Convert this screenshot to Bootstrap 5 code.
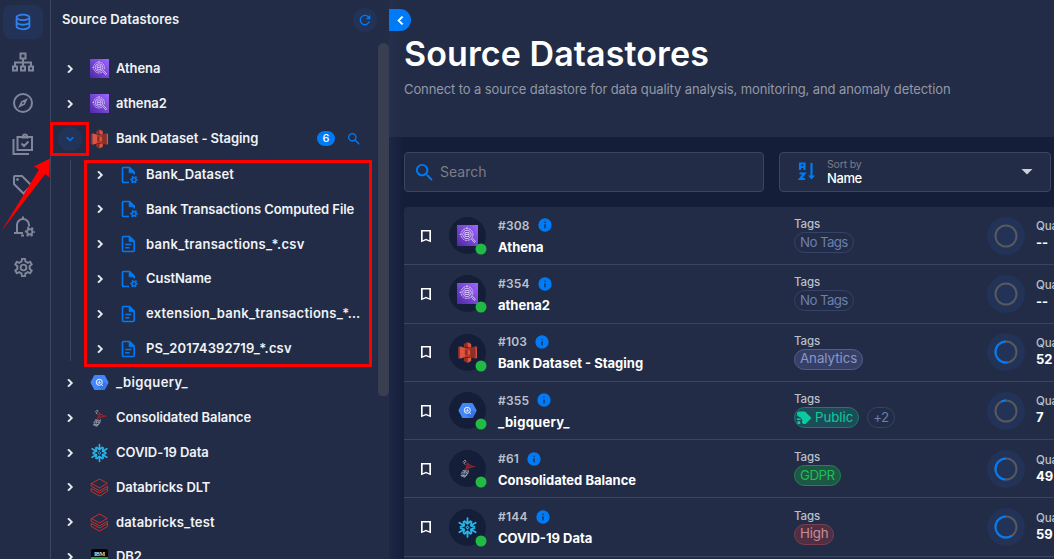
<!DOCTYPE html>
<html lang="en">
<head>
<meta charset="utf-8">
<meta name="viewport" content="width=device-width, initial-scale=1">
<title>Source Datastores</title>
<link href="https://cdn.jsdelivr.net/npm/bootstrap@5.3.0/dist/css/bootstrap.min.css" rel="stylesheet">
<style>
:root{--panel:#222c46;--deep:#151e38;--line:#3b4560;--blue:#007bf7}
html,body{height:100%}
body{font-family:Inter,"Liberation Sans",sans-serif;background:var(--deep);color:#f1f3f6;overflow:hidden;font-size:13px;line-height:1.2}
svg{display:block;flex:none}
.ic{fill:currentColor}
.rail{flex:none;width:51px;background:var(--panel);border-right:1px solid #3d465e;color:#80879a;padding:5px 4px 0 3px}
.rail a{width:40px;height:41.2px;color:inherit}
.rail a.on{background:#223357;color:#3080ee;border-radius:8px;height:34px;margin-bottom:2px}
.tree{flex:none;width:338px;background:var(--panel)}
.tree-top{height:40px;padding:0 12px 0 11px}
.tree-top h6{font-size:13px;font-weight:600;letter-spacing:.07px}
.round{width:24px;height:24px;border-radius:50%;background:#233357;color:var(--blue)}
.rows{padding-top:11.5px}
.node{height:34.88px;font-weight:600;letter-spacing:-.07px;white-space:nowrap;padding-left:7px}
.node .tw{width:24px;height:24px;margin-right:8px}
.node .pic{width:19px;margin-right:7px}
.kids .node{padding-left:37px}
.kids .pic{width:17px;margin:0 8px 0 1px}
.kids{position:relative;padding-top:1px;margin-bottom:-1px}
.kids::before{content:"";position:absolute;left:19px;top:4px;bottom:5px;width:1px;background:#3d465e}
.ls-a{letter-spacing:.14px}.ls-b{letter-spacing:.27px}.ls-c{letter-spacing:.4px}
.count{background:var(--blue);color:#fff;width:18px;height:15px;border-radius:8px;font-size:11px;font-weight:500;letter-spacing:0}
.thumb{position:absolute;left:378px;top:43px;width:11px;height:353px;border-radius:6px 6px 5px 5px;background:#393e50}
.main-pane{min-width:0;background:linear-gradient(90deg,#1c2747,#151e38 15px)}
.hero{height:137px;background:linear-gradient(90deg,#25304e,#222c46 12px);padding:33px 0 0 15px}
.hero h1{font-size:34px;font-weight:600;line-height:42px;color:#fff;letter-spacing:.1px;margin:0}
.hero p{font-size:13px;color:#9298a6;margin:6px 0 0;line-height:16px;letter-spacing:-.1px}
.fold{position:absolute;left:389px;top:9px;width:22px;height:22px;border-radius:0 11px 11px 0;background:var(--blue);color:#fff}
.tools{padding:15px 3px 0 15px;gap:15px}
.field{height:40px;border:1px solid var(--line);border-radius:4px;background:var(--panel);flex:none}
.field.find{width:360px;padding-left:8px;color:#7b7d87;font-size:14px}
.field.sort{width:272px;padding:0 14px 0 17px}
.sortby{font-size:10.5px;line-height:12px;color:#7b7d87;letter-spacing:-.15px}
.sortval{font-size:13px;line-height:14px;font-weight:500;color:#fff;letter-spacing:-.4px}
.list{margin:15px 0 0 15px;background:var(--panel);border-top-left-radius:4px}
.item{height:58.3px;border-bottom:1px solid var(--line);padding-left:14px;white-space:nowrap}
.item>*{flex:none}
.ava{width:37px;height:37px;border-radius:50%;background:#151e38;margin-left:15px;position:relative}
.ava i{position:absolute;width:11px;height:11px;border-radius:50%;background:#21ba45;right:0;bottom:0;transform:translate(.5px,.5px)}
.who{width:308px;padding:1px 0 0 12px}
.num{color:#bcc0ca;font-size:12px;font-weight:600;line-height:15px;letter-spacing:.2px}
.num svg{color:var(--blue);margin-left:7px}
.nm{font-weight:700;color:#fff;line-height:16px;margin-top:5.500px}
.tg{width:194px;padding-bottom:1px}
.lbl{font-size:11.5px;color:#bcc0ca;line-height:15px;font-weight:500;letter-spacing:-.1px}
.tag{height:21px;border:1px solid;border-radius:11px;padding:0 5px;font-size:13.3px;letter-spacing:-.05px}
.t0{color:#6d7fae;border-color:#36426a;letter-spacing:-.6px}
.t1{color:#8b96c8;border-color:#525e90;background:#364066}
.t2{color:#0bcaa1;border-color:#14806f;background:#1c4c56}
.t3{color:#1dbf4e;border-color:#1b8949;background:#1d5846;letter-spacing:-.5px}
.t4{color:#c58e98;border-color:#78404f;background:#512f43;letter-spacing:-.2px}
.disc{width:38px;height:38px;border-radius:50%;background:#223357;margin-left:-1px}
.ql{padding:0 0 1.500px 11px}
.ql b{font-size:13px;color:#fff;line-height:16px;display:block}
.notes{position:absolute;left:0;top:0;pointer-events:none}
</style>
</head>
<body>
<svg width="0" height="0" class="position-absolute">
<defs>
<linearGradient id="pu" x1="0" y1="1" x2="1" y2="0"><stop stop-color="#4d27a8"/><stop offset="1" stop-color="#a166ff"/></linearGradient>
<symbol id="chev" viewBox="0 0 24 24"><path d="M8.59 16.58 13.17 12 8.59 7.41 10 6l6 6-6 6z" stroke="currentColor"/></symbol>
<symbol id="mag" viewBox="0 0 24 24"><path d="M9.5 3A6.5 6.5 0 0 1 16 9.5c0 1.61-.59 3.09-1.56 4.23l.27.27h.79l5 5-1.5 1.5-5-5v-.79l-.27-.27A6.5 6.5 0 1 1 9.5 3m0 2C7 5 5 7 5 9.5S7 14 9.5 14 14 12 14 9.5 12 5 9.5 5"/></symbol>
<symbol id="bm" viewBox="0 0 24 24"><path fill-rule="evenodd" d="M4.500 3h15v18.500L12 18.300l-7.500 3.200zM7 5.300v12.900l5-2.200 5 2.200V5.300z" fill="#fff"/></symbol>
<symbol id="info" viewBox="0 0 24 24"><path d="M13 9h-2V7h2m0 10h-2v-6h2M12 2a10 10 0 1 0 0 20 10 10 0 0 0 0-20"/></symbol>
<symbol id="gear" viewBox="0 0 12 12"><circle cx="6" cy="6" r="3" fill="none" stroke="currentColor" stroke-width="2.200"/><circle cx="6" cy="6" r="4.7" fill="none" stroke="currentColor" stroke-width="2.200" stroke-dasharray="2.4 2.52" stroke-dashoffset="1.2"/></symbol>
<symbol id="file" viewBox="0 0 17 18"><path d="M1.5 2.5q0-1 1-1H8.5L13.2 6v9.5q0 1-1 1H2.5q-1 0-1-1z" fill="none" stroke="currentColor" stroke-width="1.6"/><path d="M8 1.500 13.500 6.800H8z" stroke="currentColor" stroke-width=".6"/><path d="M4.2 9.6h6.2M4.2 12.8h4.3" fill="none" stroke="currentColor" stroke-width="1.5"/></symbol>
<symbol id="filec" viewBox="0 0 17 18"><path d="M8 16.5H2.5q-1 0-1-1v-13q0-1 1-1H8.5L13.2 6v2.5" fill="none" stroke="currentColor" stroke-width="1.6"/><path d="M8 1.5 13.5 6.8H8z" stroke="currentColor" stroke-width=".6"/><use href="#gear" x="8.9" y="9.6" width="8.2" height="8.2"/></symbol>
<symbol id="athena" viewBox="0 0 20 20"><path fill="url(#pu)" d="M0 0h20v20H0z"/><g fill="none" stroke="#e3d5ff" stroke-width=".8"><circle cx="9.5" cy="9" r="5.7" stroke-dasharray="2.2 .6"/><circle cx="9.5" cy="9" r="4"/><path d="M7.6 7.2h3.8v3.8H7.6zM7.6 9h3.8M2.5 9H4M9.5 2v1.5M13.6 13.2l2.8 3.4 1.2-1-3-3.2"/></g></symbol>
<symbol id="s3" viewBox="0 0 20 20"><path fill="#8c3123" d="M2.500 4 1 4.800v10.400l1.500.8z"/><path fill="#e05243" d="M2.500 4 8 5.600v8.800L2.500 16z"/><path fill="#8c3123" d="M17.500 4 12 5.600v8.800l5.500 1.600z"/><path fill="#e05243" d="m17.500 4 1.500.8v10.400l-1.500.8z"/><path fill="#b0392b" d="M7.500 5.500h5v9h-5z"/><path fill="#8c3123" d="M10 0 6.500 1.800v3.700l3.500-.8zM6.500 14.500l3.500.8V20l-3.500-1.800z"/><path fill="#e05243" d="m10 0 3.500 1.800v3.700L10 4.700zM13.500 14.500l-3.500.8V20l3.500-1.800zM10 7.600l2.500.4v4l-2.500.4z"/><path fill="#8c3123" d="M10 7.600 7.500 8v4l2.500.4z"/></symbol>
<symbol id="bq" viewBox="0 0 20 18"><path fill="#4386fa" d="M5.4 1h9.2q.7 0 1.1.6l3.6 6.7q.4.7 0 1.4l-3.6 6.7q-.4.6-1.1.6H5.4q-.7 0-1.1-.6L.7 9.700q-.4-.7 0-1.4l3.6-6.7Q4.700 1 5.400 1"/><path fill="#3769cf" d="m8 12 5-5 5.800 4-3.100 5.400q-.4.6-1.1.6H12z" opacity=".6"/><circle cx="9.8" cy="8.800" r="3.2" fill="none" stroke="#fff" stroke-width="1"/><path d="M8.500 8.600v1.500M9.900 7v3.400M11.200 8.800v1M12.200 11.200l1.300 1.400" stroke="#fff" stroke-width=".9"/></symbol>
<symbol id="mssql" viewBox="0 0 20 20"><path fill="#a3242c" d="M9 2.500c1.500 2.500 4.500 4 10 5.600-3 .5-5.500.8-7.500 2C9.500 11.500 7 12 6.500 11.500 8.500 9.500 9.500 6 9 2.500"/><path d="M9.500 5 13 8.500M9.500 7.500l5.500.1M8.500 10.500l5-3.500" stroke="#4a2335" stroke-width=".8"/><path d="M5 3.500 7.500 1l1 1.500L6 4.500l2 1.300M5 12l6 .8M4 14.500l6.500.3M3 17.500l6-.3M6 12l-2.500 3.500L7 19l3-4-3-2.500-1 5M3 17.500 7 19.300l3.500-4.300.5-3.500" fill="none" stroke="#a2a9b6" stroke-width=".8"/></symbol>
<symbol id="snow" viewBox="0 0 20 20"><g fill="none" stroke="#29b5e8" stroke-width="1.7" stroke-linecap="round" stroke-linejoin="round"><path id="arm" d="M10 1v5.200M7.200 4 10 6.400 12.800 4"/><use href="#arm" transform="rotate(60 10 10)"/><use href="#arm" transform="rotate(120 10 10)"/><use href="#arm" transform="rotate(180 10 10)"/><use href="#arm" transform="rotate(240 10 10)"/><use href="#arm" transform="rotate(300 10 10)"/><path stroke-width="1" d="m10 8.600 1.400 1.400-1.400 1.400L8.600 10z"/></g></symbol>
<symbol id="brick" viewBox="0 0 20 20"><g fill="none" stroke="#d3332b" stroke-width=".95" stroke-linejoin="round"><path d="M1.200 6 10 1l8.300 4.700L10 10.400 1.200 5.600v3L10 13.500l8.500-4.800V11L10 15.800 1.200 11v3L10 19l8.500-4.900v-2.600"/></g></symbol>
</defs></svg>

<div class="d-flex h-100">
  <nav class="rail d-flex flex-column h-100">
    <a class="on d-flex align-items-center justify-content-center"><svg class="ic" width="22" height="22" viewBox="0 0 24 24"><path d="M12 3C7.580 3 4 4.790 4 7v10c0 2.210 3.590 4 8 4s8-1.790 8-4V7c0-2.210-3.580-4-8-4m6 14c0 .5-2.130 2-6 2s-6-1.500-6-2v-2.230c1.610.78 3.720 1.230 6 1.230s4.390-.45 6-1.230zm0-4.550c-1.300.95-3.580 1.550-6 1.550s-4.700-.6-6-1.550V9.640c1.470.83 3.610 1.360 6 1.360s4.530-.53 6-1.360zM12 9C8.130 9 6 7.500 6 7s2.130-2 6-2 6 1.500 6 2-2.130 2-6 2"/></svg></a>
    <a class="d-flex align-items-center justify-content-center"><svg width="24" height="22" viewBox="0 0 24 22" fill="none" stroke="currentColor" stroke-width="2"><path d="M9.500 2.500h5v5h-5zM2 15.500h4v4H2zM10 15.500h4v4h-4zM18 15.500h4v4h-4zM12 8v7M4 15v-3.500h16V15"/></svg></a>
    <a class="d-flex align-items-center justify-content-center"><svg class="ic" width="24" height="24" viewBox="0 0 24 24"><path d="M7 17l3.200-6.800L17 7l-3.200 6.800zm5-5.900a.9.9 0 1 0 0 1.800.9.9 0 0 0 0-1.800M12 2a10 10 0 1 1 0 20 10 10 0 0 1 0-20m0 2a8 8 0 1 0 0 16 8 8 0 0 0 0-16"/></svg></a>
    <a class="d-flex align-items-center justify-content-center"><svg width="24" height="24" viewBox="0 0 24 24" fill="none" stroke="currentColor" stroke-width="2"><path d="M6.500 5H21v13H6.500zM2.500 7v15H18M10.500 11.500l2.500 2.500 4.500-4.500M12 4.500a2 2 0 0 1 4 0M10.500 5.500h7"/></svg></a>
    <a class="d-flex align-items-center justify-content-center"><svg width="24" height="24" viewBox="0 0 24 24" fill="none" stroke="currentColor" stroke-width="2"><path d="M3 4q0-1 1-1h7l9.500 9.500-8 8L3 11z"/><circle cx="6.500" cy="6.500" r="1" fill="currentColor" stroke-width="1"/></svg></a>
    <a class="d-flex align-items-center justify-content-center"><svg width="24" height="24" viewBox="0 0 24 24" fill="none" stroke="currentColor" stroke-width="2"><path d="M3 19h9M6 19v-8a6 6 0 0 1 12 0v1.500M12 5V2.500M10 21.500h3"/><g transform="translate(13.500 12.500) scale(.88)"><use href="#gear" width="12" height="12"/></g></svg></a>
    <a class="d-flex align-items-center justify-content-center"><svg class="ic" width="23" height="23" viewBox="0 0 24 24"><path d="M12 8a4 4 0 1 1 0 8 4 4 0 0 1 0-8m0 2a2 2 0 1 0 0 4 2 2 0 0 0 0-4m-2 12c-.25 0-.46-.18-.5-.42l-.37-2.65c-.63-.25-1.170-.59-1.690-.99l-2.490 1.010c-.22.080-.49 0-.61-.22l-2-3.460c-.13-.22-.07-.49.120-.64l2.110-1.660L4.500 12l.07-1-2.110-1.630c-.19-.15-.25-.42-.12-.64l2-3.460c.120-.22.390-.31.610-.22l2.490 1c.52-.39 1.060-.73 1.690-.98l.37-2.650c.040-.24.250-.42.500-.42h4c.25 0 .46.180.5.420l.37 2.650c.63.250 1.170.590 1.690.980l2.490-1c.22-.09.49 0 .61.220l2 3.460c.130.220.070.490-.12.640L19.430 11l.070 1-.07 1 2.110 1.630c.19.150.25.420.120.640l-2 3.460c-.12.220-.39.310-.61.220l-2.490-1c-.52.390-1.060.730-1.690.980l-.37 2.650c-.04.240-.25.420-.5.420zm1.250-18l-.37 2.610c-1.200.25-2.260.89-3.030 1.780L5.440 7.350l-.75 1.300L6.800 10.200c-.4 1.170-.4 2.440 0 3.600l-2.120 1.560.75 1.300 2.430-1.040c.77.880 1.820 1.520 3.010 1.760l.37 2.620h1.520l.37-2.610c1.190-.25 2.240-.89 3.010-1.770l2.430 1.040.75-1.300-2.120-1.550c.4-1.170.4-2.440 0-3.610l2.110-1.550-.75-1.300-2.410 1.040c-.77-.89-1.830-1.530-3.030-1.770L12.750 4z"/></svg></a>
  </nav>

  <aside class="tree h-100 overflow-hidden">
    <div class="tree-top d-flex align-items-center justify-content-between"><h6 class="m-0">Source Datastores</h6><span class="round d-flex align-items-center justify-content-center"><svg class="ic" width="16" height="16" viewBox="0 0 24 24"><path d="M17.650 6.350A8 8 0 1 0 19.730 14h-2.080A6 6 0 1 1 12 6c1.660 0 3.140.69 4.220 1.780L13 11h7V4z"/></svg></span></div>
    <div class="rows">
      <div class="node d-flex align-items-center"><span class="tw d-flex align-items-center justify-content-center"><svg class="ic" width="16" height="16"><use href="#chev"/></svg></span><svg class="pic" height="19"><use href="#athena"/></svg>Athena</div>
      <div class="node d-flex align-items-center"><span class="tw d-flex align-items-center justify-content-center"><svg class="ic" width="16" height="16"><use href="#chev"/></svg></span><svg class="pic" height="19"><use href="#athena"/></svg>athena2</div>
      <div class="node d-flex align-items-center"><span class="tw round d-flex align-items-center justify-content-center"><svg class="ic" width="14" height="14" style="transform:rotate(90deg)"><use href="#chev"/></svg></span><svg class="pic" height="20"><use href="#s3"/></svg>Bank Dataset - Staging<span class="count d-flex align-items-center justify-content-center ms-auto">6</span><svg class="ic" width="16" height="16" style="color:var(--blue);margin:0 27px 0 11px"><use href="#mag"/></svg></div>
      <div class="kids">
        <div class="node d-flex align-items-center ls-a"><span class="tw d-flex align-items-center justify-content-center"><svg class="ic" width="16" height="16"><use href="#chev"/></svg></span><svg class="pic ic" height="18" color="#007bf7"><use href="#filec"/></svg>Bank_Dataset</div>
        <div class="node d-flex align-items-center"><span class="tw d-flex align-items-center justify-content-center"><svg class="ic" width="16" height="16"><use href="#chev"/></svg></span><svg class="pic ic" height="18" color="#007bf7"><use href="#filec"/></svg>Bank Transactions Computed File</div>
        <div class="node d-flex align-items-center ls-b"><span class="tw d-flex align-items-center justify-content-center"><svg class="ic" width="16" height="16"><use href="#chev"/></svg></span><svg class="pic ic" height="18" color="#007bf7"><use href="#file"/></svg>bank_transactions_*.csv</div>
        <div class="node d-flex align-items-center"><span class="tw d-flex align-items-center justify-content-center"><svg class="ic" width="16" height="16"><use href="#chev"/></svg></span><svg class="pic ic" height="18" color="#007bf7"><use href="#filec"/></svg>CustName</div>
        <div class="node d-flex align-items-center ls-b"><span class="tw d-flex align-items-center justify-content-center"><svg class="ic" width="16" height="16"><use href="#chev"/></svg></span><svg class="pic ic" height="18" color="#007bf7"><use href="#file"/></svg>extension_bank_transactions_*…</div>
        <div class="node d-flex align-items-center ls-a"><span class="tw d-flex align-items-center justify-content-center"><svg class="ic" width="16" height="16"><use href="#chev"/></svg></span><svg class="pic ic" height="18" color="#007bf7"><use href="#file"/></svg>PS_20174392719_*.csv</div>
      </div>
      <div class="node d-flex align-items-center ls-c"><span class="tw d-flex align-items-center justify-content-center"><svg class="ic" width="16" height="16"><use href="#chev"/></svg></span><svg class="pic" height="17"><use href="#bq"/></svg>_bigquery_</div>
      <div class="node d-flex align-items-center"><span class="tw d-flex align-items-center justify-content-center"><svg class="ic" width="16" height="16"><use href="#chev"/></svg></span><svg class="pic" height="18"><use href="#mssql"/></svg>Consolidated Balance</div>
      <div class="node d-flex align-items-center"><span class="tw d-flex align-items-center justify-content-center"><svg class="ic" width="16" height="16"><use href="#chev"/></svg></span><svg class="pic" height="20"><use href="#snow"/></svg>COVID-19 Data</div>
      <div class="node d-flex align-items-center"><span class="tw d-flex align-items-center justify-content-center"><svg class="ic" width="16" height="16"><use href="#chev"/></svg></span><svg class="pic" height="19"><use href="#brick"/></svg>Databricks DLT</div>
      <div class="node d-flex align-items-center ls-a"><span class="tw d-flex align-items-center justify-content-center"><svg class="ic" width="16" height="16"><use href="#chev"/></svg></span><svg class="pic" height="19"><use href="#brick"/></svg>databricks_test</div>
      <div class="node d-flex align-items-center"><span class="tw d-flex align-items-center justify-content-center"><svg class="ic" width="16" height="16"><use href="#chev"/></svg></span><svg class="pic" height="16" viewBox="0 0 19 16"><rect x="1" width="17" height="16" rx="2" fill="#050505"/><path fill="#24a148" d="M1 8h17v6q0 2-2 2H3q-2 0-2-2z"/><text x="4" y="6.500" font-size="6" font-weight="700" font-family="Liberation Serif" fill="#ddd" textLength="11">IBM</text></svg>DB2</div>
    </div>
  </aside>

  <main class="main-pane flex-grow-1 overflow-hidden">
    <header class="hero"><h1>Source Datastores</h1><p>Connect to a source datastore for data quality analysis, monitoring, and anomaly detection</p></header>
    <div class="tools d-flex">
      <div class="field find d-flex align-items-center"><svg class="ic me-1" width="23" height="23" style="color:var(--blue)"><use href="#mag"/></svg>Search</div>
      <div class="field sort d-flex align-items-center"><svg width="22" height="22" viewBox="0 0 22 22" fill="none" stroke="#007bf7" stroke-width="2.200"><path d="M3 9V2.500h4.500V9M3 6h4.500M2.500 12.500h5l-4.500 5.500h5M14.500 2v14"/><path d="M11 14.500h7l-3.500 4z" fill="#007bf7" stroke="none"/></svg><div class="ms-2"><div class="sortby">Sort by</div><div class="sortval">Name</div></div><svg class="ms-auto" width="18" height="10" viewBox="0 0 18 10"><path d="M3.500 2h11L9 7.500z" fill="#ced1d9"/></svg></div>
    </div>
    <section class="list">
      <div class="item d-flex align-items-center"><svg class="ic" width="16" height="16"><use href="#bm"/></svg><div class="ava d-flex align-items-center justify-content-center"><svg width="21" height="21"><use href="#athena"/></svg><i></i></div><div class="who"><div class="num d-flex align-items-center">#308<svg class="ic" width="16" height="16"><use href="#info"/></svg></div><div class="nm">Athena</div></div><div class="tg"><div class="lbl">Tags</div><div class="d-flex"><span class="tag t0 d-flex align-items-center">No Tags</span></div></div><div class="disc d-flex align-items-center justify-content-center"><svg width="24" height="24" viewBox="0 0 24 24" fill="none" stroke-width="2"><circle cx="12" cy="12" r="10.500" stroke="#59595d"/></svg></div><div class="ql"><div class="lbl">Quality Score</div><b>--</b></div></div>
      <div class="item d-flex align-items-center"><svg class="ic" width="16" height="16"><use href="#bm"/></svg><div class="ava d-flex align-items-center justify-content-center"><svg width="21" height="21"><use href="#athena"/></svg><i></i></div><div class="who"><div class="num d-flex align-items-center">#354<svg class="ic" width="16" height="16"><use href="#info"/></svg></div><div class="nm">athena2</div></div><div class="tg"><div class="lbl">Tags</div><div class="d-flex"><span class="tag t0 d-flex align-items-center">No Tags</span></div></div><div class="disc d-flex align-items-center justify-content-center"><svg width="24" height="24" viewBox="0 0 24 24" fill="none" stroke-width="2"><circle cx="12" cy="12" r="10.500" stroke="#59595d"/></svg></div><div class="ql"><div class="lbl">Quality Score</div><b>--</b></div></div>
      <div class="item d-flex align-items-center"><svg class="ic" width="16" height="16"><use href="#bm"/></svg><div class="ava d-flex align-items-center justify-content-center"><svg width="21" height="21"><use href="#s3"/></svg><i></i></div><div class="who"><div class="num d-flex align-items-center">#103<svg class="ic" width="16" height="16"><use href="#info"/></svg></div><div class="nm">Bank Dataset - Staging</div></div><div class="tg"><div class="lbl">Tags</div><div class="d-flex"><span class="tag t1 d-flex align-items-center">Analytics</span></div></div><div class="disc d-flex align-items-center justify-content-center"><svg width="24" height="24" viewBox="0 0 24 24" fill="none" stroke-width="2"><circle cx="12" cy="12" r="10.500" stroke="#59595d"/><circle cx="12" cy="12" r="10.500" pathLength="100" stroke="#007bf7" stroke-dasharray="52 100" transform="matrix(0 -1 -1 0 24 24)"/></svg></div><div class="ql"><div class="lbl">Quality Score</div><b>52</b></div></div>
      <div class="item d-flex align-items-center"><svg class="ic" width="16" height="16"><use href="#bm"/></svg><div class="ava d-flex align-items-center justify-content-center"><svg width="19" height="19"><use href="#bq"/></svg><i></i></div><div class="who"><div class="num d-flex align-items-center">#355<svg class="ic" width="16" height="16"><use href="#info"/></svg></div><div class="nm ls-b">_bigquery_</div></div><div class="tg"><div class="lbl">Tags</div><div class="d-flex"><span class="tag t2 d-flex align-items-center" style="padding-left:1px"><svg class="ic me-1" width="16" height="16" viewBox="0 0 17 16"><path d="M1 2.500 3 1h6.500L16.500 8 10 14.500H7.500L6 12l1-1-2-3.500L1.500 6zM1 8.500h4v1.500H1zM1.500 11.500h3v3h-3z"/></svg><span style="margin-left:-1px">Public</span></span><span class="tag t0 d-flex align-items-center ms-2">+2</span></div></div><div class="disc d-flex align-items-center justify-content-center"><svg width="24" height="24" viewBox="0 0 24 24" fill="none" stroke-width="2"><circle cx="12" cy="12" r="10.500" stroke="#59595d"/><circle cx="12" cy="12" r="10.500" pathLength="100" stroke="#007bf7" stroke-dasharray="7 100" transform="matrix(0 -1 -1 0 24 24)"/></svg></div><div class="ql"><div class="lbl">Quality Score</div><b>7</b></div></div>
      <div class="item d-flex align-items-center"><svg class="ic" width="16" height="16"><use href="#bm"/></svg><div class="ava d-flex align-items-center justify-content-center"><svg width="19" height="19"><use href="#mssql"/></svg><i></i></div><div class="who"><div class="num d-flex align-items-center">#61<svg class="ic" width="16" height="16"><use href="#info"/></svg></div><div class="nm">Consolidated Balance</div></div><div class="tg"><div class="lbl">Tags</div><div class="d-flex"><span class="tag t3 d-flex align-items-center">GDPR</span></div></div><div class="disc d-flex align-items-center justify-content-center"><svg width="24" height="24" viewBox="0 0 24 24" fill="none" stroke-width="2"><circle cx="12" cy="12" r="10.500" stroke="#59595d"/><circle cx="12" cy="12" r="10.500" pathLength="100" stroke="#007bf7" stroke-dasharray="49 100" transform="matrix(0 -1 -1 0 24 24)"/></svg></div><div class="ql"><div class="lbl">Quality Score</div><b>49</b></div></div>
      <div class="item d-flex align-items-center"><svg class="ic" width="16" height="16"><use href="#bm"/></svg><div class="ava d-flex align-items-center justify-content-center"><svg width="21" height="21"><use href="#snow"/></svg><i></i></div><div class="who"><div class="num d-flex align-items-center">#144<svg class="ic" width="16" height="16"><use href="#info"/></svg></div><div class="nm">COVID-19 Data</div></div><div class="tg"><div class="lbl">Tags</div><div class="d-flex"><span class="tag t4 d-flex align-items-center">High</span></div></div><div class="disc d-flex align-items-center justify-content-center"><svg width="24" height="24" viewBox="0 0 24 24" fill="none" stroke-width="2"><circle cx="12" cy="12" r="10.500" stroke="#59595d"/><circle cx="12" cy="12" r="10.500" pathLength="100" stroke="#007bf7" stroke-dasharray="59 100" transform="matrix(0 -1 -1 0 24 24)"/></svg></div><div class="ql"><div class="lbl">Quality Score</div><b>59</b></div></div>
      <div class="item"></div>
    </section>
  </main>
</div>
<div class="thumb"></div>
<div class="fold d-flex align-items-center justify-content-center"><svg class="ic" width="17" height="17" style="transform:rotate(180deg)"><use href="#chev"/></svg></div>
<!-- callouts pointing at the expanded node and its children -->
<svg class="notes" width="400" height="380" fill="none" stroke="#f00" stroke-width="3"><path d="M51.500 123.500h36v31h-36zM85.500 161.500h285v204h-285z"/><path fill="#f00" stroke="none" d="m50 158.500-16 8 5 3L1.500 231l43.800-57 4 3.500z"/></svg>
<script src="https://cdn.jsdelivr.net/npm/bootstrap@5.3.0/dist/js/bootstrap.bundle.min.js"></script>
</body>
</html>
